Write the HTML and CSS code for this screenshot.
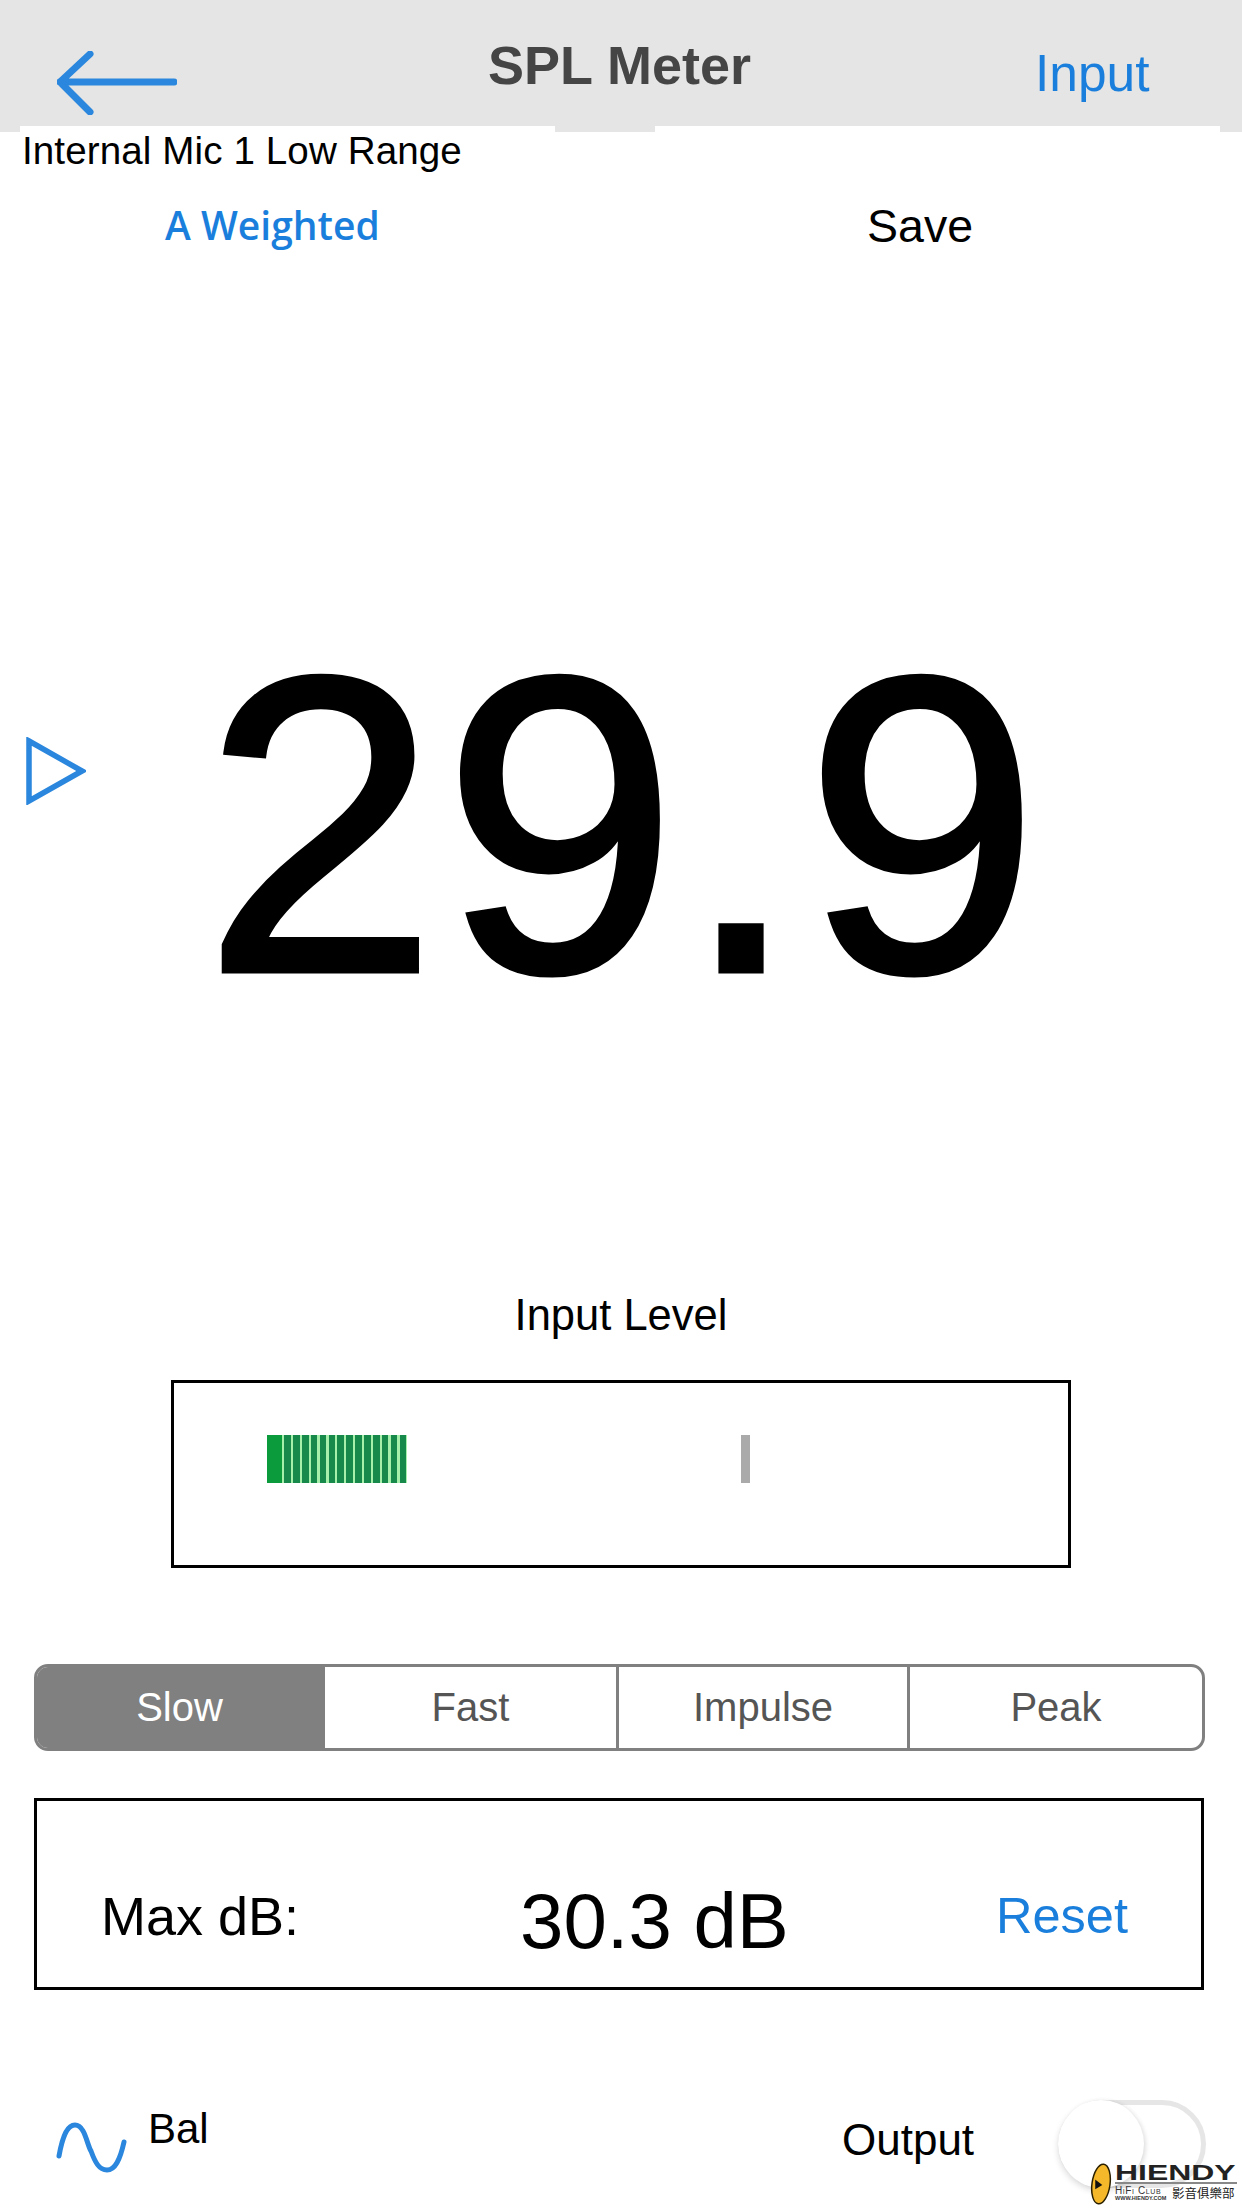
FILE: index.html
```html
<!DOCTYPE html>
<html lang="en">
<head>
<meta charset="utf-8">
<title>SPL Meter</title>
<link rel="stylesheet" href="styles.css">
</head>
<body>
<div class="page">
  <header class="header">
    <div class="bar">
      <svg class="back" viewBox="0 0 120 64" width="120" height="64"><path d="M33 3 L3 31 L33 61 M3 31 H117" fill="none" stroke="#2a87dd" stroke-width="7" stroke-linecap="round" stroke-linejoin="round"/></svg>
      <h1 class="title">SPL Meter</h1>
      <span class="input-link">Input</span>
    </div>
    <div class="strip"><i class="s1"></i><i class="s2"></i><i class="s3"></i><i class="s4"></i><i class="s5"></i></div>
  </header>
  <div class="mic">Internal Mic 1 Low Range</div>
  <div class="options">
    <span class="weighted">A Weighted</span>
    <span class="save">Save</span>
  </div>
  <div class="reading">
    <svg class="play" viewBox="0 0 60 68" width="60" height="68"><path d="M3 4 L56 34 L3 64 Z" fill="none" stroke="#2a87dd" stroke-width="5.5" stroke-linejoin="miter"/></svg>
    <div class="value">29.9</div>
  </div>
  <div class="level-label">Input Level</div>
  <div class="level-box">
    <div class="level-solid"></div>
    <div class="level-stripes"></div>
    <div class="level-tick"></div>
  </div>
  <div class="segments">
    <div class="seg active">Slow</div>
    <div class="seg">Fast</div>
    <div class="seg">Impulse</div>
    <div class="seg">Peak</div>
  </div>
  <div class="max-box">
    <span class="max-label">Max dB:</span>
    <span class="max-value">30.3 dB</span>
    <span class="reset">Reset</span>
  </div>
  <div class="footer">
    <svg class="sine" viewBox="0 0 72 54" width="72" height="54"><path d="M4 36 C8 14 13 5 20 5 C30 5 32 25 36 31 C40 42 44 50 52 50 C60 50 65 40 69 22" fill="none" stroke="#2a87dd" stroke-width="5" stroke-linecap="round"/></svg>
    <span class="bal">Bal</span>
    <span class="output">Output</span>
    <div class="toggle"><div class="knob"></div></div>
  </div>
  <div class="logo">
    <svg class="disc" viewBox="0 0 24 42" width="24" height="42"><ellipse cx="12" cy="21" rx="9" ry="20" transform="rotate(8 12 21)" fill="#f5b82a" stroke="#2a2000" stroke-width="1.5"/><path d="M7 18 L12 22 L7 25 Z" fill="#111" stroke="#111" stroke-width="1.5"/></svg>
    <div class="logo-text">
      <div class="logo-name">HIENDY</div>
      <div class="logo-rule"></div>
      <div class="logo-sub">
        <div class="logo-latin"><div class="logo-club">HiFi Club</div><div class="logo-www">WWW.HIENDY.COM</div></div>
        <div class="logo-cjk">影音俱樂部</div>
      </div>
    </div>
  </div>
</div>
</body>
</html>
```
FILE: styles.css
```css
* { box-sizing: border-box; }
html, body { margin: 0; padding: 0; background: #fff; }
body { font-family: "Liberation Sans", Arial, sans-serif; color: #000; }
.page { position: relative; width: 1242px; height: 2208px; overflow: hidden; display: flex; flex-direction: column; }

.header { background: #e5e5e5; height: 132px; display: flex; flex-direction: column; flex: none; }
.bar { height: 126px; display: flex; align-items: flex-start; padding-left: 57px; }
.back { margin-top: 51px; flex: none; }
.title { margin: 38px 0 0 311px; font-size: 54px; line-height: 54px; font-weight: bold; color: #454545; width: 262px; white-space: nowrap; }
.input-link { margin: 45px 0 0 285px; font-size: 51.5px; line-height: 56px; color: #1a7fdc; }
.strip { height: 6px; display: flex; }
.strip i { display: block; height: 6px; }
.s1 { width: 20px; }
.s2 { width: 535px; background: #fff; }
.s3 { width: 100px; }
.s4 { width: 565px; background: #fff; }
.s5 { width: 22px; }

.mic { margin: -3px 0 0 22px; font-size: 38.6px; line-height: 44px; height: 44px; letter-spacing: 0.1px; white-space: nowrap; flex: none; }
.options { height: 95px; display: flex; align-items: center; padding-top: 8px; flex: none; }
.weighted { margin-left: 165px; width: 702px; font-family: "Open Sans", sans-serif; font-weight: 600; font-size: 39px; color: #1a7fdc; white-space: nowrap; }
.save { font-size: 46.5px; line-height: 56px; white-space: nowrap; padding-top: 2px; }

.reading { height: 1017px; display: flex; align-items: flex-start; flex: none; }
.play { margin: 469px 0 0 26px; flex: none; }
.value { margin: 346px 0 0 117px; font-size: 422px; line-height: 422px; letter-spacing: 5px; white-space: nowrap; -webkit-text-stroke: 5px #000; }

.level-label { height: 60px; text-align: center; font-size: 43.5px; line-height: 60px; flex: none; }
.level-box { margin: 35px 0 0 171px; width: 900px; height: 188px; border: 3px solid #000; display: flex; padding: 52px 0 0 93px; flex: none; }
.level-solid { width: 15px; height: 48px; background: #0b9a3c; }
.level-stripes { width: 125px; height: 48px; background: repeating-linear-gradient(90deg, #a6f0ac 0, #a6f0ac 2.2px, #17894a 2.2px, #17894a 8.87px); }
.level-tick { width: 9px; height: 48px; margin-left: 334px; background: #aaa; }

.segments { margin: 96px 0 0 34px; width: 1171px; height: 87px; display: grid; grid-template-columns: 285px 294px 291px 1fr; border: 3px solid #808080; border-radius: 14px; overflow: hidden; flex: none; }
.seg { display: flex; align-items: center; justify-content: center; font-size: 40px; color: #555; border-left: 3px solid #808080; }
.seg.active { background: #808080; color: #fff; border-left: 0; }

.max-box { margin: 47px 0 0 34px; width: 1170px; height: 192px; border: 3px solid #000; display: flex; align-items: flex-start; flex: none; }
.max-label { margin: 85px 0 0 64px; width: 419px; font-size: 54px; line-height: 60px; white-space: nowrap; }
.max-value { margin: 77px 0 0 0; width: 478px; font-size: 78px; line-height: 86px; white-space: nowrap; }
.reset { margin: 85px 0 0 -2px; font-size: 50.5px; line-height: 60px; color: #1a7fdc; white-space: nowrap; }

.footer { margin-top: 100px; height: 110px; display: flex; align-items: flex-start; flex: none; }
.sine { margin: 30px 0 0 55px; flex: none; }
.bal { margin: 15px 0 0 21px; width: 694px; font-size: 42px; line-height: 48px; }
.output { margin: 26px 0 0 0; width: 216px; font-size: 44px; line-height: 48px; }
.toggle { margin-top: 10px; width: 148px; height: 88px; border: 5px solid #e6e6e6; border-radius: 44px; background: #fff; position: relative; flex: none; }
.knob { position: absolute; left: -5px; top: -5px; width: 86px; height: 88px; border-radius: 50%; background: #fff; box-shadow: 0 3px 6px rgba(0,0,0,.14), 2px 0 4px rgba(0,0,0,.05); }

.logo { position: absolute; left: 1089px; top: 2163px; display: flex; gap: 2px; }
.logo-text { width: 122px; }
.logo-name { font-size: 22px; line-height: 19px; height: 19px; font-weight: bold; color: #222; transform: scaleX(1.45); transform-origin: 0 50%; white-space: nowrap; }
.logo-rule { height: 2px; background: #888; }
.logo-sub { display: flex; margin-top: 2px; gap: 3px; }
.logo-latin { width: 54px; }
.logo-club { font-size: 10px; line-height: 9px; color: #333; font-variant: small-caps; letter-spacing: .6px; white-space: nowrap; }
.logo-www { font-size: 5.5px; line-height: 7px; font-weight: bold; color: #333; white-space: nowrap; }
.logo-cjk { font-family: "Noto Sans CJK TC", sans-serif; font-size: 12.5px; line-height: 13px; color: #222; white-space: nowrap; }
```
